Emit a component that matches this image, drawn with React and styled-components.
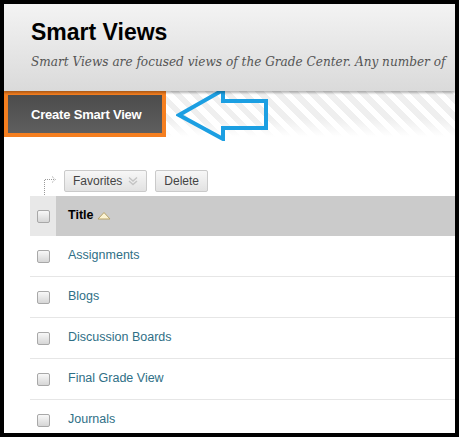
import React from 'react';
import styled, { createGlobalStyle } from 'styled-components';

const GlobalStyle = createGlobalStyle`
    html, body {
        margin: 0;
        padding: 0;
        background: #000;
    }
    body {
        font-family: "Liberation Sans", Arial, sans-serif;
    }
`;

const views = ['Assignments', 'Blogs', 'Discussion Boards', 'Final Grade View', 'Journals'];

function Checkbox() {
    return <Box />;
}

function App() {
    return (
        <>
            <GlobalStyle />
            <Frame>
                <Page>
                    <PageHeader>
                        <PageTitle>Smart Views</PageTitle>
                        <PageIntro>Smart Views are focused views of the Grade Center. Any number of</PageIntro>
                    </PageHeader>

                    <ActionBar>
                        <CreateButton>Create Smart View</CreateButton>
                        <CalloutArrow viewBox="0 0 94 54" width="94" height="54">
                            <polygon
                                points="3,28 47,3 47,14 90,14 90,41 47,41 47,52"
                                fill="none"
                                stroke="#1c9fe2"
                                strokeWidth="4"
                                strokeLinejoin="miter"
                            />
                        </CalloutArrow>
                    </ActionBar>

                    <Toolbar>
                        <Connector viewBox="0 0 16 22" width="16" height="22">
                            <path d="M2.5 22 V4.5 H13" fill="none" stroke="#9a9a9a" strokeDasharray="1 1" />
                            <path d="M10 1.5 L13.5 4.5 L10 7.5" fill="none" stroke="#9a9a9a" strokeDasharray="1 1" />
                        </Connector>
                        <ToolButton>
                            Favorites
                            <svg viewBox="0 0 10 10" width="10" height="10">
                                <path d="M1 1.5 L5 5 L9 1.5 M1 5 L5 8.5 L9 5" fill="none" stroke="#c4c4c4" strokeWidth="1.4" />
                            </svg>
                        </ToolButton>
                        <ToolButton>Delete</ToolButton>
                    </Toolbar>

                    <Table>
                        <HeadRow>
                            <HeadCheck>
                                <Checkbox />
                            </HeadCheck>
                            <HeadTitle>
                                Title
                                <svg viewBox="0 0 14 9" width="14" height="9">
                                    <polygon points="1,8 7,1.5 13,8" fill="#fbf3d2" stroke="#b8a36a" strokeWidth="1" />
                                </svg>
                            </HeadTitle>
                        </HeadRow>
                        {views.map((name, i) => (
                            <Row key={name} $last={i === views.length - 1}>
                                <CheckCell>
                                    <Checkbox />
                                </CheckCell>
                                <ViewLink>{name}</ViewLink>
                            </Row>
                        ))}
                    </Table>
                </Page>
            </Frame>
        </>
    );
}

const Frame = styled.div`
    width: 459px;
    height: 437px;
    box-sizing: border-box;
    border: 4px solid #000;
    background: #000;
    overflow: hidden;
`;

const Page = styled.div`
    height: 100%;
    background: #fff;
    overflow: hidden;
`;

const PageHeader = styled.header`
    height: 87px;
    box-sizing: border-box;
    padding: 15px 0 0 27px;
    background: linear-gradient(#f3f3f3, #dadada);
    box-shadow: 0 2px 2px rgba(0, 0, 0, 0.28);
    position: relative;
    z-index: 1;
    overflow: hidden;
`;

const PageTitle = styled.h1`
    margin: 0;
    font-size: 23px;
    line-height: 26px;
    font-weight: bold;
    color: #000;
`;

const PageIntro = styled.p`
    margin: 8px 0 0;
    font-family: "DejaVu Serif", "Liberation Serif", serif;
    font-style: italic;
    font-size: 12.1px;
    line-height: 18px;
    color: #555;
    white-space: nowrap;
`;

const ActionBar = styled.div`
    display: flex;
    align-items: center;
    height: 46px;
    background:
        linear-gradient(rgba(255, 255, 255, 0) 60%, #fff 100%),
        repeating-linear-gradient(45deg, #fff 0 6px, #efefef 6px 12px);
`;

const CreateButton = styled.button`
    height: 46px;
    width: 162px;
    box-sizing: border-box;
    border: 4px solid #f57f20;
    background: linear-gradient(#4c4c4c, #5f5f5f);
    color: #fff;
    font-family: "Liberation Sans", Arial, sans-serif;
    font-size: 13px;
    font-weight: bold;
    letter-spacing: -0.2px;
    text-align: left;
    padding: 0 0 0 23px;
    margin: 0;
`;

const CalloutArrow = styled.svg`
    margin-left: 10px;
    flex: none;
`;

const Toolbar = styled.div`
    display: flex;
    align-items: flex-start;
    gap: 8px;
    height: 22px;
    margin-top: 33px;
    padding-left: 38px;
`;

const Connector = styled.svg`
    margin-top: 5px;
    margin-right: -2px;
    overflow: visible;
`;

const ToolButton = styled.button`
    display: flex;
    align-items: center;
    gap: 6px;
    height: 22px;
    box-sizing: border-box;
    padding: 0 8px;
    margin: 0;
    border: 1px solid #cacaca;
    border-radius: 2px;
    background: linear-gradient(#f7f7f7, #e2e2e2);
    font-family: "Liberation Sans", Arial, sans-serif;
    font-size: 12px;
    color: #444;
`;

const Table = styled.div`
    margin: 4px 0 0 26px;
`;

const HeadRow = styled.div`
    display: grid;
    grid-template-columns: 26px 1fr;
    height: 40px;
`;

const HeadCheck = styled.div`
    display: flex;
    align-items: center;
    justify-content: center;
    background: #e8e8e8;
`;

const HeadTitle = styled.div`
    display: flex;
    align-items: center;
    gap: 4px;
    padding: 0 0 2px 12px;
    background: #cbcbcb;
    font-size: 12.5px;
    font-weight: bold;
    color: #000;
`;

const Row = styled.div`
    display: grid;
    grid-template-columns: 26px 1fr;
    align-items: center;
    height: 40px;
    box-sizing: content-box;
    border-bottom: ${(p) => (p.$last ? 'none' : '1px solid #e6e6e6')};
`;

const CheckCell = styled.div`
    display: flex;
    justify-content: center;
`;

const Box = styled.span`
    display: block;
    width: 11px;
    height: 11px;
    border: 1px solid #a8a8a8;
    border-radius: 2px;
    background: linear-gradient(#f8f8f8, #d6d6d6);
`;

const ViewLink = styled.a`
    padding: 0 0 3px 12px;
    font-size: 12.5px;
    color: #2f6f86;
    text-decoration: none;
`;

export default App;
